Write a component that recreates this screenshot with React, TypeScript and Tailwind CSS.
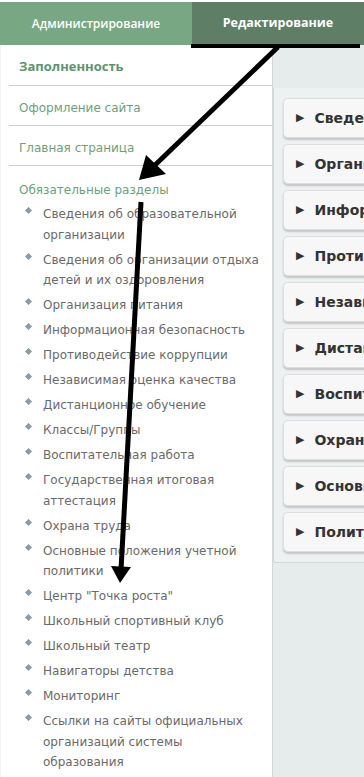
const menu = ["Оформление сайта", "Главная страница"];

const sections = [
  "Сведения об образовательной организации",
  "Сведения об организации отдыха детей и их оздоровления",
  "Организация питания",
  "Информационная безопасность",
  "Противодействие коррупции",
  "Независимая оценка качества",
  "Дистанционное обучение",
  "Классы/Группы",
  "Воспитательная работа",
  "Государственная итоговая аттестация",
  "Охрана труда",
  "Основные положения учетной политики",
  'Центр "Точка роста"',
  "Школьный спортивный клуб",
  "Школьный театр",
  "Навигаторы детства",
  "Мониторинг",
  "Ссылки на сайты официальных организаций системы образования",
];

const cards = [
  "Сведения об образовательной организации",
  "Организация питания",
  "Информационная безопасность",
  "Противодействие коррупции",
  "Независимая оценка качества",
  "Дистанционное обучение",
  "Воспитательная работа",
  "Охрана труда",
  "Основные положения учетной политики",
  "Политика конфиденциальности",
];

export default function App() {
  return (
    <div className="relative h-[777px] w-[364px] overflow-hidden bg-white font-['DejaVu_Sans',sans-serif]">
      {/* tabs */}
      <div className="mt-[2px] flex h-[43px] font-['Open_Sans',sans-serif] text-white">
        <div className="flex w-[192px] items-center justify-center bg-[#78a784] text-[12px] font-semibold">
          Администрирование
        </div>
        <div className="flex flex-1 items-center justify-center bg-[#5f7e66] text-[12.5px] font-bold">
          Редактирование
        </div>
      </div>

      <div className="flex h-[732px]">
        {/* sidebar */}
        <div className="w-[273px] shrink-0 border-l border-[#f4f4f4] pl-[8px]">
          <div className="border-r border-[#d6d6d6]">
            <div className="flex h-[41px] items-center border-b border-[#cfcfcf] pl-[10px] pt-[3px] font-['Open_Sans',sans-serif] text-[13px] font-bold text-[#5f9270]">
              Заполненность
            </div>
            {menu.map((m) => (
              <div
                key={m}
                className="flex h-[40px] items-center border-b border-[#cfcfcf] pl-[10px] pt-[5px] text-[12px] text-[#6d9f7b]"
              >
                {m}
              </div>
            ))}
            <div className="pl-[10px] pt-[15px] text-[12px] text-[#6d9f7b]">Обязательные разделы</div>
            <ul className="mt-[5px] flex flex-col gap-[4.5px] pb-[20px] pl-[17px] pr-[13px]">
              {sections.map((s) => (
                <li key={s} className="flex gap-[10px] text-[12px] leading-[20.5px] text-[#6a6a6a]">
                  <span className="mt-[4px] h-[5px] w-[5px] shrink-0 rotate-45 bg-[#8a9aa6]" />
                  <span className="ml-[2px]">{s}</span>
                </li>
              ))}
            </ul>
          </div>
        </div>

        {/* content */}
        <div className="flex-1 bg-[#e6ebeb]">
          <div className="mt-[43px] w-[120px] rounded-bl-[3px] border-b border-l border-[#d3d8d8] bg-[#eef1f1] py-[10px] pl-[9px]">
            <div className="flex flex-col gap-[6px]">
              {cards.map((c) => (
                <div
                  key={c}
                  className="flex h-[40px] items-center gap-[10px] whitespace-nowrap rounded-l-[5px] border border-r-0 border-[#dedede] bg-[#f7f7f7] pl-[12px] text-[14px] font-bold text-[#333] shadow-[0_2px_2px_rgba(0,0,0,0.18)]"
                >
                  <span className="text-[11px]">▶</span>
                  <span>{c}</span>
                </div>
              ))}
            </div>
          </div>
        </div>
      </div>

      {/* annotation arrows */}
      <svg className="pointer-events-none absolute left-0 top-0" width="364" height="777">
        <rect x="191" y="44" width="169" height="4" fill="#000" />
        <line x1="278" y1="47" x2="154" y2="166" stroke="#000" strokeWidth="5" />
        <polygon points="139,180 146,155 166,174" fill="#000" />
        <line x1="141" y1="202" x2="121" y2="570" stroke="#000" strokeWidth="5" />
        <polygon points="120,583 111,566 131,567" fill="#000" />
      </svg>
    </div>
  );
}
